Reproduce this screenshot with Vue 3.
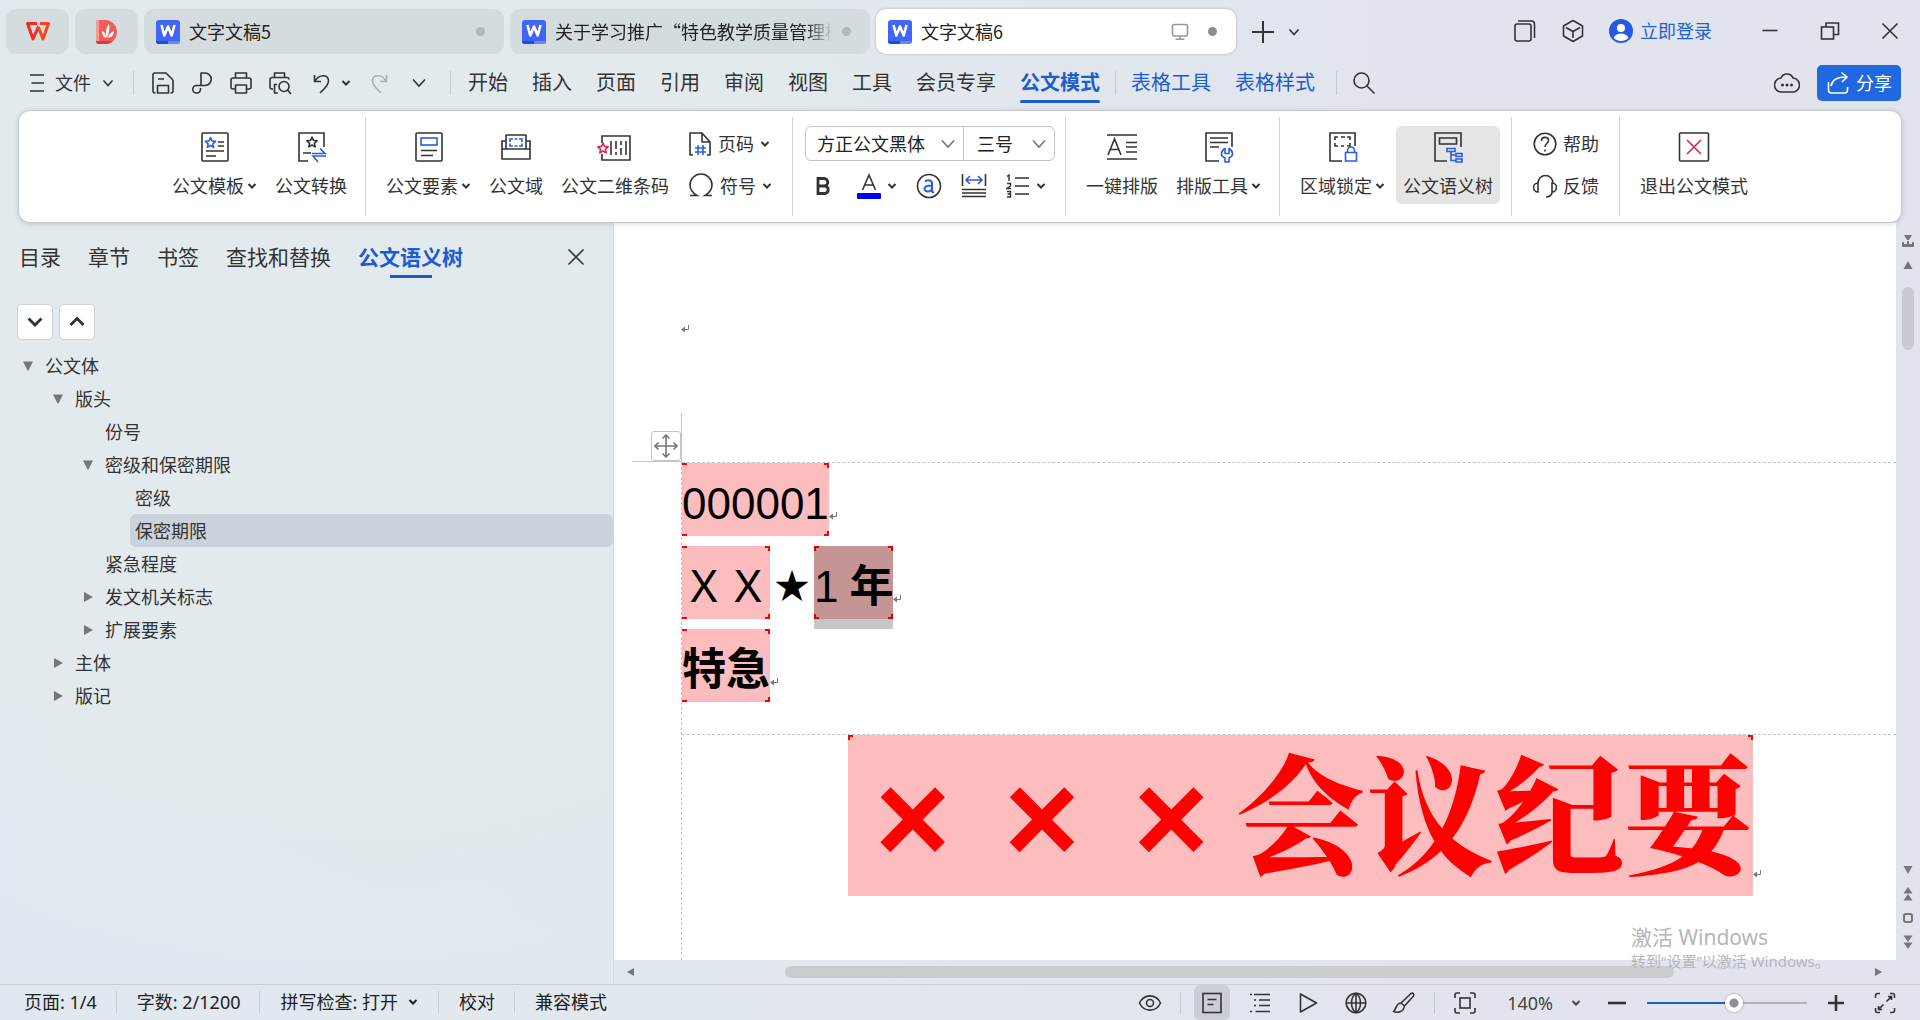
<script setup>
import { h, ref } from 'vue'

const blue = '#2b5ce6'
const red = '#d02850'
const star = (x, y, c) =>
  `<path stroke="${c}" stroke-linejoin="round" d="M${x} ${y - 5}l1.5 3.4 3.6.4-2.7 2.5.8 3.6-3.2-1.9-3.2 1.9.8-3.6-2.7-2.5 3.6-.4z"/>`

const glyphs = {
  wps: [26, 24, '<path stroke="#f5291c" stroke-width="3" stroke-linejoin="round" d="M12 3.500H2.500L8 19l5.500-12.500"/><path stroke="#f8431c" stroke-width="3" stroke-linejoin="round" d="M15 3.500h8.500L18 19 13.500 7.500"/>'],
  pdf: [24, 26, '<path stroke="none" fill="#f25c5c" d="M1 4a3 3 0 013-3h6a12 12 0 010 24H4a3 3 0 01-3-3z"/><path stroke="none" fill="#f79a9a" d="M1 4a3 3 0 013-3v21H1z"/><path stroke="none" fill="#d93a3a" d="M1 22h17c-2 2-5 3-8 3H4a3 3 0 01-3-3z"/><path stroke="none" fill="#fff" d="M12 19c-2-5-1-10 2-14 1 4 0 9-2 14zM11 19c-3-1-4-4-4-7 3 1 4 4 4 7zM13 19c1-4 3-6 6-7 0 4-2 6-6 7z"/>'],
  doc: [24, 24, '<rect stroke="none" width="24" height="24" rx="3" fill="#4166f5"/><path stroke="none" fill="#144fe0" d="M0 21h12v3H3a3 3 0 01-3-3z"/><path stroke="none" fill="#5c8cff" d="M12 21h12a3 3 0 01-3 3h-9z"/><path stroke="#fff" stroke-width="2.600" stroke-linejoin="round" d="M5.500 5l2.800 10.500L12 6.500l3.700 9L18.500 5"/>'],
  monitor: [18, 18, '<rect x="1.500" y="1.500" width="15" height="11.500" rx="2"/><path d="M9 13v3M4.500 16.200h9"/>'],
  plus: [22, 22, '<path stroke-width="2" d="M11 0v22M0 11h22"/>'],
  down: [12, 12, '<path d="M1.500 3.500L6 8.500l4.500-5"/>'],
  downWide: [14, 12, '<path d="M1 2.500l6 6.500 6-6.500"/>'],
  caret: [10, 10, '<path stroke-width="2" d="M1.500 3l3.500 3.500L8.500 3"/>'],
  windows: [24, 24, '<rect x="2" y="5" width="16" height="17" rx="2"/><path d="M5 2h13.500a3 3 0 013 3v14"/>'],
  cube: [24, 24, '<path stroke-linejoin="round" d="M12 1.500l9.500 5.500v10L12 22.500 2.500 17V7zM5 8.500l7 4 7-4M12 12.500V19"/>'],
  user: [24, 24, '<circle cx="12" cy="12" r="12" fill="#2459e0" stroke="none"/><circle cx="12" cy="9" r="4" fill="#fff" stroke="none"/><path d="M4.500 19c2-6 13-6 15 0-4 4-11 4-15 0z" fill="#fff" stroke="none"/>'],
  min: [20, 20, '<path d="M2.500 9.500h15"/>'],
  restore: [20, 20, '<rect x="1.500" y="6" width="12" height="12"/><path d="M6 6V2h12.500v11.500h-5"/>'],
  close: [18, 18, '<path d="M1.500 1.500l15 15M16.500 1.500l-15 15"/>'],
  menu: [14, 20, '<path d="M0 2h14M1.500 10h12.500M0 18h14"/>'],
  save: [24, 24, '<path stroke-linejoin="round" d="M22 9v11a2 2 0 01-2 2h-.5M4.500 22H4a2 2 0 01-2-2V4a2 2 0 012-2h11l7 7M7 8h6M6.500 22v-7.500h11V22z"/>'],
  link: [24, 24, '<path stroke-linejoin="round" d="M11 14.500V2h4a6.200 6.200 0 010 12.500H6.500a3.700 3.700 0 100 7.500c2.500 0 4-1.500 4-4v-1"/>'],
  print: [24, 24, '<path stroke-linejoin="round" d="M6.500 7V2h11v5M6 18H4a2 2 0 01-2-2V9a2 2 0 012-2h16a2 2 0 012 2v7a2 2 0 01-2 2h-2M6.500 14h11v8h-11z"/>'],
  preview: [24, 24, '<path stroke-linejoin="round" d="M6.500 6.500V2h10v4.500M5 18H4a2 2 0 01-2-2V8.500a2 2 0 012-2h15a2 2 0 012 2M10 22H6.500v-8.500H9"/><circle cx="16" cy="15.500" r="5"/><path d="M19.500 19l3.500 4"/>'],
  undo: [24, 24, '<path d="M7.500 4v6.500h6.500M8 10c4-7 13-7 13.500-.5.2 4-3 7-8.500 12.500"/>'],
  redo: [24, 24, '<path d="M18.500 4v6.500H12M18 10C14 3 5 3 4.500 9.500c-.2 4 3 7 8.500 12.500"/>'],
  search: [24, 24, '<circle cx="9.500" cy="9.500" r="7.500"/><path d="M15 15l7.500 7.500"/>'],
  cloud: [26, 24, '<path d="M7 7a6.500 6.500 0 0112 0 7 7 0 01-1 14H8A7 7 0 017 7z"/><g fill="currentColor" stroke="none"><circle cx="8.500" cy="14" r="1.500"/><circle cx="13" cy="14" r="1.500"/><circle cx="17.500" cy="14" r="1.500"/></g>'],
  share: [24, 24, '<path d="M2.500 11v8a3 3 0 003 3h13a3 3 0 003-3v-3M5 15c1-6 6-9 15-9M15.500 1.500L21 6l-5 5"/>'],

  template: [32, 32, `<rect x="3" y="2" width="26" height="28" rx="1"/>${star(11.5, 11.5, blue)}<path d="M19 11h6M19 15h6M7 20h18M7 25h10"/>`],
  convert: [32, 32, `<path d="M13 30H4V2h25v14M8 22h8"/>${star(17, 11, '#333')}<path stroke="${blue}" d="M17 22.500h13l-5-5M31 25H18l5 6"/>`],
  element: [32, 32, `<rect x="3" y="2" width="26" height="28" rx="1"/><rect x="8" y="7" width="16" height="7" stroke="${blue}"/><path d="M8 19.500h16M8 24.500h12"/>`],
  field: [32, 32, `<path stroke-linejoin="round" d="M6 18V4h20v14M6 10H2v18h28V10h-4M2 18h28"/><path stroke="${blue}" d="M10 11V8h3M19 8h3v3M22 12.500V15h-3M13 15h-3v-2.500M14.500 8h3M14.500 15h3"/>`],
  qrcode: [36, 32, `<path d="M5 12V5h28v24H5v-6M14 10v14M19 10v8M19 21v3M24 10v4M24 17v7M29 10v14"/>${star(6, 17, red)}`],
  pageNo: [24, 26, `<path stroke-linejoin="round" d="M5 24H2V2h12l8 9v13h-3M14 2v9h8"/><path stroke="${blue}" d="M10 14v10M15 14v10M7 17h11M7 21h11"/>`],
  omega: [26, 26, '<path d="M2 22.500h7c-5-3-7-6.500-7-10.500a11 11 0 0122 0c0 4-2 7.500-7 10.500h7"/>'],
  bold: [24, 20, '<path stroke-width="2.800" d="M4 2.500h6a3.700 3.700 0 010 7.500H4zM4 10h7a3.800 3.800 0 010 7.500H4z"/>'],
  fontColor: [24, 26, '<path d="M5.500 17L12 2l6.500 15M8 12h8"/><rect y="20" width="24" height="6" rx="1" fill="#0000f5" stroke="none"/>'],
  circleA: [26, 26, `<circle cx="13" cy="13" r="11.500"/><path stroke="${blue}" stroke-width="2" d="M9 8.500c3-2 7-1.500 7 2V18c0 1 1 1.500 2 1M16 12.500c-5 0-7.500 1-7.500 3.300 0 3.700 7.500 3.700 7.500-1"/>`],
  spread: [26, 26, `<path d="M1.500 1v12M24.500 1v12M1 16.500h24M1 20h24M1 23.500h24"/><path stroke="${blue}" d="M5 7h16M9 3L5 7l4 4M17 3l4 4-4 4"/>`],
  numbers: [24, 24, '<path d="M9 4h14M9 12h14M9 20h14"/><path stroke-width="1.400" d="M1 2.500L3 1v6M1 9.500h3.500V12L1 14.500h4M1 17.500h3.500V23H1M1.500 20h3"/>'],
  format: [32, 32, '<path d="M1 4h30M1 28h30M20 11.500h11M20 16h11M20 21h11M2 24L8.500 8 15 24M4.500 18.500h8"/>'],
  formatTool: [32, 32, `<path d="M16 30H3V2h26v14M7 7h18M7 11.500h18M7 16h9"/><path stroke="${blue}" stroke-linejoin="round" d="M22 17.500c-5 3-4.500 8 0 9.500v4h4v-4c4.500-1.500 5-6.500 0-9.500v5h-4z"/>`],
  lock: [32, 32, `<path d="M15 30H3V2h25v13M8 9V6h3M20 6h3v3M23 12v3h-3M11 15H8v-3M14 6h4M14 15h3"/><path stroke="${blue}" d="M18.500 21.500h11V30h-11zM20.500 21.500v-2a3.500 3.500 0 017 0v2"/>`],
  tree: [32, 32, `<path d="M15 30H3V2h26v14M7.500 7h17v6h-17z"/><path stroke="${blue}" d="M15 17.500h8v3h-8zM24 22.500h6v3h-6zM24 28h6v3h-6zM19 20.500v9h5M19 24h5"/>`],
  help: [24, 26, '<circle cx="12" cy="13" r="10.800"/><path d="M8.500 10c0-5 7-4.500 7-.5 0 3-3.500 3-3.500 6.500M12 18.500v2"/>'],
  headset: [24, 26, '<path d="M5 10a7.500 7.500 0 0115 0M5 10a4 4 0 000 9zM19 10a4 4 0 010 9zM19.500 19c-1 3-3 5-6.500 5"/>'],
  exit: [32, 32, `<rect x="1.500" y="2" width="29" height="28" rx="1"/><path stroke="${red}" d="M9 9l14 14M23 9L9 23"/>`],

  chevDown: [18, 18, '<path stroke-width="2.800" d="M2.500 5.500L9 12l6.500-6.500"/>'],
  chevUp: [18, 18, '<path stroke-width="2.800" d="M2.500 12L9 5.500l6.500 6.500"/>'],
  triDown: [12, 12, '<path fill="#777" stroke="none" d="M1 1.500h10L6.500 10.500h-1z"/>'],
  triRight: [12, 12, '<path fill="#777" stroke="none" d="M2 1l9 5-9 5z"/>'],
  move: [24, 24, '<path stroke="#777" d="M12 1v22M1 12h22M8.500 4.500L12 1l3.500 3.500M8.500 19.500L12 23l3.500-3.500M4.500 8.500L1 12l3.500 3.500M19.500 8.500L23 12l-3.500 3.500"/>'],
  ret: [8, 10, '<path stroke="#777" stroke-width="1" d="M7.500 1v4.500H1"/><path fill="#777" stroke="none" d="M0 5.500L4 2.500v6z"/>'],

  eye: [24, 24, '<path d="M1.500 12C6 2.500 18 2.500 22.500 12 18 21.500 6 21.500 1.500 12z"/><circle cx="12" cy="12" r="3.500"/>'],
  page: [24, 24, '<rect x="3" y="2.500" width="18" height="19"/><path d="M7.500 8.500h9M7.500 13.500h6"/>'],
  outline: [24, 24, '<path d="M6 3.500h16M11 9h11M11 14.500h11M7.500 20.500H22M2 3.500h2M6 9h2M6 14.500h2M2 20.500h2"/>'],
  play: [24, 24, '<path stroke-linejoin="round" d="M4.500 3l16 9-16 9z"/>'],
  globe: [24, 24, '<circle cx="12" cy="12" r="9.800"/><path d="M2 12h20M12 2v20M12 2c-6 5-6 15 0 20M12 2c6 5 6 15 0 20"/>'],
  pen: [24, 24, '<path stroke-linejoin="round" d="M9 12l10-9.500c2-1 3.500.5 2.500 2.500L12.500 15zM9 12c-5 0-4.500 6-7.500 8.500 4 1.500 10 1 11-5.500"/>'],
  fit: [24, 24, '<path d="M7 2H4a2 2 0 00-2 2v3M17 2h3a2 2 0 012 2v3M7 22H4a2 2 0 01-2-2v-3M17 22h3a2 2 0 002-2v-3"/><rect x="7" y="7" width="10" height="10"/>'],
  minus: [18, 18, '<path stroke-width="2.600" d="M0 9h18"/>'],
  plusBold: [16, 16, '<path stroke-width="2.600" d="M8 0v16M0 8h16"/>'],
  full: [22, 22, '<path d="M1.500 6V3.500a2 2 0 012-2H6M16 1.500h2.500a2 2 0 012 2V6M1.500 16v2.500a2 2 0 002 2H6M16 20.500h2.500a2 2 0 002-2V16M12.500 9.500l5-5M14 4.500h3.500V8M9.500 12.500l-5 5M4.500 14v3.500H8"/>'],

  sUp: [12, 12, '<path fill="#777" stroke="none" d="M6 2l4.500 8h-9z"/>'],
  sDown: [12, 12, '<path fill="#777" stroke="none" d="M6 10l4.500-8h-9z"/>'],
  sLeft: [12, 12, '<path fill="#777" stroke="none" d="M2 6l7-4v8z"/>'],
  sRight: [12, 12, '<path fill="#777" stroke="none" d="M10 6L3 2v8z"/>'],
  ruler: [14, 14, '<path fill="#777" stroke="none" d="M3 1h8L8 6H6zM1 8h2v2h3V7h2v3h3V8h2v5H1z"/>'],
  dUp: [12, 14, '<path fill="#777" stroke="none" d="M6 0l4.500 6.500h-9zM6 7l4.500 6.500h-9z"/>'],
  dDown: [12, 14, '<path fill="#777" stroke="none" d="M6 7L1.500.5h9zM6 14L1.500 7.500h9z"/>'],
  dot: [12, 12, '<rect x="2" y="2" width="8" height="8" rx="2" stroke="#777" stroke-width="2"/>'],
}

const Icon = (props) => {
  const [w, ht, body] = glyphs[props.name]
  return h('svg', {
    width: w,
    height: ht,
    viewBox: `0 0 ${w} ${ht}`,
    fill: 'none',
    stroke: 'currentColor',
    'stroke-width': 1.6,
    'aria-hidden': 'true',
    innerHTML: body,
  })
}
Icon.props = ['name']

const menus = ['开始', '插入', '页面', '引用', '审阅', '视图', '工具', '会员专享']
const sideTabs = ['目录', '章节', '书签', '查找和替换', '公文语义树']
const tree = [
  { level: 0, label: '公文体', icon: 'triDown' },
  { level: 1, label: '版头', icon: 'triDown' },
  { level: 2, label: '份号' },
  { level: 2, label: '密级和保密期限', icon: 'triDown' },
  { level: 3, label: '密级' },
  { level: 3, label: '保密期限' },
  { level: 2, label: '紧急程度' },
  { level: 2, label: '发文机关标志', icon: 'triRight' },
  { level: 2, label: '扩展要素', icon: 'triRight' },
  { level: 1, label: '主体', icon: 'triRight' },
  { level: 1, label: '版记', icon: 'triRight' },
]
const selected = ref('保密期限')
const zoom = ref(55)
</script>

<template>
  <div class="app">
    <header class="titlebar">
      <button class="tab home" aria-label="首页"><Icon name="wps" /></button>
      <button class="tab home" aria-label="稻壳"><Icon name="pdf" /></button>
      <div class="tab file"><Icon name="doc" /><span class="tab-name">文字文稿5</span><i class="dot"></i></div>
      <div class="tab file"><Icon name="doc" /><span class="tab-name fade">关于学习推广“特色教学质量管理模</span><i class="dot"></i></div>
      <div class="tab file current">
        <Icon name="doc" /><span class="tab-name">文字文稿6</span><Icon name="monitor" class="grey" /><i class="dot"></i>
      </div>
      <button class="new-tab" aria-label="新建"><Icon name="plus" /></button>
      <button aria-label="标签列表"><Icon name="down" /></button>
      <div class="title-tools">
        <button aria-label="窗口"><Icon name="windows" /></button>
        <button aria-label="应用"><Icon name="cube" /></button>
        <button class="login"><Icon name="user" />立即登录</button>
      </div>
      <div class="win-buttons">
        <button aria-label="最小化"><Icon name="min" /></button>
        <button aria-label="还原"><Icon name="restore" /></button>
        <button aria-label="关闭"><Icon name="close" /></button>
      </div>
    </header>

    <nav class="menubar">
      <button class="file-menu"><Icon name="menu" />文件<Icon name="down" /></button>
      <i class="sep first"></i>
      <div class="quick">
        <button aria-label="保存"><Icon name="save" /></button>
        <button aria-label="输出"><Icon name="link" /></button>
        <button aria-label="打印"><Icon name="print" /></button>
        <button aria-label="打印预览"><Icon name="preview" /></button>
        <button class="undo" aria-label="撤销"><Icon name="undo" /><Icon name="caret" /></button>
        <button class="disabled" aria-label="恢复"><Icon name="redo" /></button>
        <button class="more" aria-label="更多"><Icon name="downWide" /></button>
      </div>
      <i class="sep"></i>
      <div class="menus">
        <button v-for="m in menus" :key="m">{{ m }}</button>
        <button class="on">公文模式</button>
      </div>
      <i class="sep"></i>
      <div class="menus blue"><button>表格工具</button><button>表格样式</button></div>
      <i class="sep tight"></i>
      <button aria-label="搜索"><Icon name="search" /></button>
      <div class="menu-right">
        <button aria-label="云"><Icon name="cloud" /></button>
        <button class="share"><Icon name="share" />分享</button>
      </div>
    </nav>

    <section class="ribbon">
      <div class="group">
        <button class="big"><Icon name="template" /><span>公文模板<Icon name="caret" /></span></button>
        <button class="big"><Icon name="convert" /><span>公文转换</span></button>
      </div>
      <div class="group">
        <button class="big"><Icon name="element" /><span>公文要素<Icon name="caret" /></span></button>
        <button class="big"><Icon name="field" /><span>公文域</span></button>
        <button class="big"><Icon name="qrcode" /><span>公文二维条码</span></button>
        <div class="stack">
          <button><Icon name="pageNo" />页码<Icon name="caret" /></button>
          <button><Icon name="omega" />符号<Icon name="caret" /></button>
        </div>
      </div>
      <div class="group font-group">
        <div class="font-boxes">
          <label class="font-name"><select aria-label="字体"><option>方正公文黑体</option></select><Icon name="downWide" /></label>
          <label class="font-size"><select aria-label="字号"><option>三号</option></select><Icon name="downWide" /></label>
        </div>
        <div class="font-tools">
          <button aria-label="加粗"><Icon name="bold" /></button>
          <button aria-label="字体颜色"><Icon name="fontColor" /><Icon name="caret" /></button>
          <button aria-label="带圈字符"><Icon name="circleA" /></button>
          <button aria-label="分散对齐"><Icon name="spread" /></button>
          <button aria-label="编号"><Icon name="numbers" /><Icon name="caret" /></button>
        </div>
      </div>
      <div class="group">
        <button class="big"><Icon name="format" /><span>一键排版</span></button>
        <button class="big"><Icon name="formatTool" /><span>排版工具<Icon name="caret" /></span></button>
      </div>
      <div class="group">
        <button class="big"><Icon name="lock" /><span>区域锁定<Icon name="caret" /></span></button>
        <button class="big active"><Icon name="tree" /><span>公文语义树</span></button>
      </div>
      <div class="group">
        <div class="stack">
          <button><Icon name="help" />帮助</button>
          <button><Icon name="headset" />反馈</button>
        </div>
      </div>
      <div class="group">
        <button class="big"><Icon name="exit" /><span>退出公文模式</span></button>
      </div>
    </section>

    <main class="workspace">
      <aside class="side">
        <div class="side-tabs">
          <button v-for="t in sideTabs" :key="t" :class="{ on: t === '公文语义树' }">{{ t }}</button>
          <button class="side-close" aria-label="关闭窗格"><Icon name="close" /></button>
        </div>
        <div class="side-tools">
          <button aria-label="展开"><Icon name="chevDown" /></button>
          <button aria-label="收起"><Icon name="chevUp" /></button>
        </div>
        <ul class="tree">
          <li v-for="n in tree" :key="n.label" :class="'level-' + n.level">
            <span class="toggle"><Icon v-if="n.icon" :name="n.icon" /></span>
            <button :class="{ selected: n.label === selected }" @click="selected = n.label">{{ n.label }}</button>
          </li>
        </ul>
      </aside>

      <section class="editor">
        <div class="canvas-row">
          <article class="doc">
            <div class="page-head"><Icon name="ret" /></div>
            <div class="corner"><button class="handle" aria-label="移动表格"><Icon name="move" /></button></div>
            <div class="sheet">
              <div class="cell top-cell">
                <div class="line"><span class="field">000001</span><Icon name="ret" /></div>
                <div class="line">
                  <span class="field">ＸＸ</span><span class="star">★</span><span class="picked"><span class="field dark"><span>1</span><b>年</b></span></span><Icon name="ret" />
                </div>
                <div class="line"><span class="field"><b>特急</b></span><Icon name="ret" /></div>
              </div>
              <div class="cell title-cell">
                <h1 class="headline">
                  <span v-for="i in 3" :key="i" class="cross">×</span>
                  <span v-for="c in '会议纪要'" :key="c">{{ c }}</span>
                </h1>
                <Icon name="ret" />
              </div>
            </div>
          </article>
          <div class="vscroll">
            <Icon name="ruler" /><Icon name="sUp" />
            <div class="vtrack"><div class="vthumb"></div></div>
            <Icon name="sDown" /><Icon name="dUp" /><Icon name="dot" /><Icon name="dDown" />
          </div>
        </div>
        <div class="hscroll">
          <Icon name="sLeft" />
          <div class="htrack"><div class="hthumb"></div></div>
          <Icon name="sRight" />
        </div>
      </section>
    </main>

    <footer class="status">
      <span class="item">页面: 1/4</span>
      <span class="item">字数: 2/1200</span>
      <button class="item">拼写检查: 打开<Icon name="caret" /></button>
      <button class="item">校对</button>
      <span class="item">兼容模式</span>
      <div class="status-right">
        <button aria-label="护眼"><Icon name="eye" /></button>
        <i class="sep"></i>
        <button class="view-on" aria-label="页面视图"><Icon name="page" /></button>
        <button class="view" aria-label="大纲"><Icon name="outline" /></button>
        <button class="view" aria-label="阅读"><Icon name="play" /></button>
        <button class="view" aria-label="网页"><Icon name="globe" /></button>
        <button class="view" aria-label="写作"><Icon name="pen" /></button>
        <i class="sep"></i>
        <button aria-label="适应"><Icon name="fit" /></button>
        <button class="percent">140%<Icon name="caret" /></button>
        <button aria-label="缩小"><Icon name="minus" /></button>
        <input v-model="zoom" type="range" min="0" max="100" aria-label="缩放" />
        <button aria-label="放大"><Icon name="plusBold" /></button>
        <button class="fullscreen" aria-label="全屏"><Icon name="full" /></button>
      </div>
    </footer>

    <div class="watermark">
      <p class="wm-title">激活 Windows</p>
      <p>转到“设置”以激活 Windows。</p>
    </div>
  </div>
</template>

<style>
body {
  margin: 0;
}
</style>

<style scoped>
.app {
  position: relative;
  display: flex;
  flex-direction: column;
  height: 100vh;
  overflow: hidden;
  color: #222;
  font: 18px/24px "Noto Sans", "Noto Sans CJK SC", sans-serif;
  background:
    radial-gradient(ellipse 40% 60% at 18% 35%, #e2eaed 60%, transparent),
    linear-gradient(90deg, #e1e8f0, #e2e8ed 45%, #e1e4ed 75%);
}
svg {
  flex: none;
  display: block;
}
button {
  display: flex;
  align-items: center;
  padding: 0;
  border: 0;
  background: none;
  color: #333;
  font: inherit;
  white-space: nowrap;
}
.sep {
  width: 1px;
  height: 24px;
  background: #c4cacd;
}

/* window title bar */
.titlebar {
  display: flex;
  align-items: center;
  gap: 6px;
  height: 45px;
  padding: 9px 0 2px 6px;
}
.tab {
  display: flex;
  align-items: center;
  box-sizing: border-box;
  height: 45px;
  border-radius: 10px;
  background: rgba(195, 203, 206, 0.45);
}
.home {
  justify-content: center;
  width: 63px;
}
.file {
  flex: 0 1 360px;
  gap: 9px;
  min-width: 0;
  padding: 0 19px 0 12px;
}
.current {
  background: #fff;
  box-shadow: 0 0 3px rgba(0, 0, 0, 0.25);
}
.tab-name {
  flex: 1;
  overflow: hidden;
  font-family: "Noto Sans CJK SC", sans-serif;
  line-height: 26px;
  padding-bottom: 2px;
  white-space: nowrap;
}
.fade {
  mask-image: linear-gradient(90deg, #000 90%, transparent);
}
.grey {
  color: #999;
  margin-right: 10px;
}
.dot {
  width: 9px;
  height: 9px;
  border-radius: 50%;
  background: #b4b8ba;
}
.current .dot {
  background: #8e8e8e;
}
.new-tab {
  margin: 0 8px 0 10px;
}
.title-tools,
.win-buttons {
  display: flex;
  padding-bottom: 2px;
}
.title-tools {
  gap: 24px;
  margin-left: auto;
}
.login {
  gap: 7px;
  color: #1f5fd0;
}
.win-buttons {
  margin-left: 22px;
}
.win-buttons button {
  justify-content: center;
  width: 60px;
}

/* menu bar */
.menubar {
  display: flex;
  align-items: center;
  height: 54px;
  padding: 0 19px 0 30px;
}
.file-menu {
  gap: 11px;
}
.menubar .sep {
  margin: 0 17px 0 19px;
}
.menubar .first {
  margin: 0 17px 0 19px;
}
.menubar .sep.tight {
  margin: 0 15px 0 21px;
}
.quick {
  display: flex;
  align-items: center;
  gap: 15px;
}
.undo {
  gap: 10px;
  width: 46px;
}
.more {
  justify-content: center;
  width: 24px;
}
.disabled {
  color: #aaaeb0;
}
.menus {
  display: flex;
  gap: 24px;
  font-size: 20px;
}
.menubar .menus + .sep {
  margin: 0 15px;
}
.menubar .blue + .sep {
  margin-left: 21px;
}
.menus .on {
  position: relative;
  color: #1b5cd0;
  font-weight: 700;
}
.menus .on::after {
  content: "";
  position: absolute;
  inset: auto 0 -8px;
  height: 3px;
  border-radius: 2px;
  background: #1b5cd0;
}
.blue button {
  color: #1b5cd0;
}
.menu-right {
  display: flex;
  align-items: center;
  gap: 17px;
  margin-left: auto;
}
.share {
  gap: 6px;
  height: 36px;
  padding: 0 9px;
  border-radius: 5px;
  background: #1f68e0;
  color: #fff;
}

/* ribbon */
.ribbon {
  position: relative;
  z-index: 1;
  display: flex;
  align-items: flex-start;
  height: 99px;
  margin: 0 18px;
  padding: 6px 0 6px 146px;
  border: 1px solid #c6cacf;
  border-radius: 12px;
  background: #fff;
  box-shadow: 0 1px 5px rgba(0, 0, 0, 0.16);
}
.group {
  display: flex;
  gap: 4px;
  box-sizing: border-box;
  height: 99px;
  padding: 9px 11px 0 13px;
  border-right: 1px solid #d4d4d4;
}
.group:first-child {
  padding-left: 0;
}
.group:last-child {
  border-right: 0;
}
.big {
  flex-direction: column;
  gap: 11px;
  height: 78px;
  padding: 5px 7px 0;
  box-sizing: border-box;
  border-radius: 6px;
}
.big span {
  display: flex;
  align-items: center;
  gap: 3px;
}
.active {
  background: #e5e5e5;
}
.stack {
  display: flex;
  flex-direction: column;
  gap: 7px;
  padding: 0 9px 0 8px;
}
.stack button {
  gap: 6px;
  height: 35px;
}
.font-group {
  flex-direction: column;
  gap: 12px;
}
.font-boxes {
  display: flex;
  box-sizing: border-box;
  height: 35px;
  border: 1px solid #c4c4c4;
  border-radius: 6px;
}
.font-boxes label {
  position: relative;
  display: flex;
  align-items: center;
  box-sizing: border-box;
  color: #777;
}
.font-name {
  width: 158px;
  border-right: 1px solid #c4c4c4;
}
.font-size {
  width: 90px;
}
.font-boxes svg {
  position: absolute;
  right: 8px;
  pointer-events: none;
}
select {
  width: 100%;
  height: 100%;
  padding: 0 0 0 11px;
  border: 0;
  background: none;
  color: #222;
  font: inherit;
  appearance: none;
}
.font-size select {
  padding-left: 13px;
}
.font-tools {
  display: flex;
  align-items: center;
  gap: 19px;
  height: 26px;
  padding-left: 9px;
}
.font-tools button {
  gap: 6px;
}
.ribbon .font-group {
  padding-left: 12px;
  padding-right: 10px;
}

/* side pane */
.workspace {
  display: flex;
  flex: 1;
  min-height: 0;
}
.side {
  flex: 0 0 32%;
  box-sizing: border-box;
  max-width: 614px;
  border-right: 1px solid #d3d8dc;
}
.side-tabs {
  display: flex;
  gap: 27px;
  padding: 18px 28px 0 19px;
  font-size: 21px;
  line-height: 32px;
}
.side-tabs .on {
  position: relative;
  color: #1b5cd0;
  font-weight: 700;
}
.side-tabs .on::after {
  content: "";
  position: absolute;
  bottom: -5px;
  left: 50%;
  width: 42px;
  height: 3px;
  margin-left: -21px;
  background: #1b5cd0;
}
.side-close {
  margin-left: auto;
}
.side-tools {
  display: flex;
  gap: 6px;
  padding: 31px 17px 9px;
}
.side-tools button {
  justify-content: center;
  box-sizing: border-box;
  width: 36px;
  height: 36px;
  border: 1px solid #cdd2d5;
  border-radius: 5px;
  background: #fff;
}
.tree {
  margin: 0;
  padding: 0;
  list-style: none;
}
.tree li {
  display: flex;
  align-items: center;
  height: 33px;
}
.tree .level-0 { padding-left: 16px; }
.tree .level-1 { padding-left: 46px; }
.tree .level-2 { padding-left: 76px; }
.tree .level-3 { padding-left: 106px; }
.toggle {
  display: flex;
  justify-content: center;
  width: 24px;
}
.tree button {
  flex: 1;
  height: 33px;
  padding-left: 5px;
  border-radius: 6px;
}
.tree .selected {
  background: #cbd2dc;
}

/* document */
.editor {
  flex: 1;
  display: flex;
  flex-direction: column;
  min-width: 0;
}
.canvas-row {
  display: flex;
  flex: 1;
  min-height: 0;
}
.doc {
  flex: 1;
  display: flex;
  flex-direction: column;
  min-width: 0;
  overflow: hidden;
  background: #fff;
  color: #000;
}
.page-head {
  height: 89px;
  padding: 101px 0 0 67px;
}
.corner {
  position: relative;
  flex: none;
  width: 49px;
  height: 48px;
  margin-left: 18px;
  border: solid #c4c4c4;
  border-width: 0 1px 1px 0;
}
.handle {
  position: absolute;
  right: 0;
  bottom: 0;
  justify-content: center;
  width: 30px;
  height: 30px;
  border: 1px solid #c4c4c4;
  border-radius: 3px;
  background: #fff;
}
.sheet {
  flex: 1;
  margin-left: 67px;
  border-left: 1px dashed #c4c4c4;
}
.cell {
  border-top: 1px dashed #c4c4c4;
}
.top-cell {
  display: flex;
  flex-direction: column;
  gap: 10px;
  height: 271px;
}
.line {
  display: flex;
  height: 73px;
  font: 44px/63px "Liberation Sans", "Noto Sans CJK SC", sans-serif;
}
.line > svg {
  align-self: flex-end;
  margin-bottom: 15px;
}
.field,
.star {
  box-sizing: border-box;
  height: 73px;
  padding-top: 9px;
}
.star {
  width: 44px;
  font-size: 35px;
  text-align: center;
}
.field,
.headline {
  --r: linear-gradient(#f00, #f00);
  background:
    var(--r) left top / 5px 2px no-repeat,
    var(--r) right top / 5px 2px no-repeat,
    var(--r) right top / 2px 5px no-repeat,
    var(--r) left bottom / 5px 2px no-repeat,
    var(--r) right bottom / 5px 2px no-repeat,
    var(--r) right bottom / 2px 5px no-repeat,
    #fdbdbe;
}
.picked {
  height: 83px;
  background: #c6c6c6;
}
.dark {
  display: flex;
  gap: 11px;
  --r: linear-gradient(#e00000, #e00000);
  background:
    var(--r) left top / 5px 2px no-repeat,
    var(--r) left top / 2px 5px no-repeat,
    var(--r) right top / 5px 2px no-repeat,
    var(--r) right top / 2px 5px no-repeat,
    var(--r) left bottom / 5px 2px no-repeat,
    var(--r) left bottom / 2px 5px no-repeat,
    var(--r) right bottom / 5px 2px no-repeat,
    var(--r) right bottom / 2px 5px no-repeat,
    #c59494;
}
.title-cell {
  display: flex;
  padding-left: 166px;
}
.title-cell > svg {
  margin-top: 134px;
}
.headline {
  display: flex;
  width: 905px;
  height: 161px;
  margin: 0;
  background:
    var(--r) left top / 5px 2px no-repeat,
    var(--r) left top / 2px 5px no-repeat,
    var(--r) right top / 5px 2px no-repeat,
    var(--r) right top / 2px 5px no-repeat,
    #fdbdbe;
  color: #f00;
  font: 900 129px/150px "Noto Serif CJK SC", "Noto Sans CJK SC", serif;
}
.headline span {
  flex: 1;
  text-align: center;
}
.headline .cross {
  font-family: "Liberation Sans", sans-serif;
  line-height: 166px;
}

/* scroll bars */
.vscroll {
  display: flex;
  flex-direction: column;
  align-items: center;
  gap: 11px;
  width: 24px;
  padding: 11px 0;
}
.vtrack {
  flex: 1;
  padding-top: 5px;
}
.vthumb {
  width: 12px;
  height: 63px;
  border-radius: 6px;
  background: #c8cbd1;
}
.hscroll {
  display: flex;
  align-items: center;
  height: 24px;
  padding: 0 36px 0 11px;
}
.htrack {
  flex: 1;
}
.hthumb {
  width: 72%;
  height: 12px;
  margin-left: 12%;
  border-radius: 6px;
  background: #c9cdd0;
}

/* status bar */
.status {
  display: flex;
  align-items: center;
  height: 35px;
  padding: 0 24px 0 4px;
  border-top: 1px solid #c9cdd2;
}
.item {
  display: flex;
  align-items: center;
  gap: 10px;
  height: 22px;
  padding: 0 19px 0 20px;
  color: #222;
  line-height: 22px;
  white-space: nowrap;
}
.item + .item {
  border-left: 1px solid #c9cdd2;
}
button.item:has(svg) {
  padding-right: 20px;
}
.item:nth-child(-n + 5) {
  margin-bottom: 1px;
}
.status-right {
  display: flex;
  align-items: center;
  margin-left: auto;
}
.status-right .sep {
  height: 22px;
  margin: 0 18px 0 12px;
}
.status-right .sep:nth-of-type(1) {
  margin: 0 13px 0 18px;
}
.view-on,
.view {
  justify-content: center;
  width: 36px;
  height: 35px;
  margin-right: 12px;
}
.view-on {
  border-radius: 6px;
  background: #cbced7;
}
.view:nth-of-type(6) {
  margin-right: 0;
}
.percent {
  gap: 18px;
  margin: 0 27px 0 30px;
  color: #444;
}
.status-right input {
  width: 160px;
  height: 20px;
  margin: 0 21px;
  background: linear-gradient(90deg, #1b5cd0 55%, #b0b3b8 55%) center / 100% 2px no-repeat;
  appearance: none;
}
.status-right input::-webkit-slider-thumb {
  width: 18px;
  height: 18px;
  border-radius: 50%;
  background: radial-gradient(circle, #909090 4px, #fff 5px);
  box-shadow: 0 0 2px rgba(0, 0, 0, 0.5);
  appearance: none;
}
.fullscreen {
  margin-left: 30px;
}

.watermark {
  position: absolute;
  right: 96px;
  bottom: 47px;
  color: #b4b6ba;
  font-size: 15px;
  pointer-events: none;
}
.watermark p {
  width: 193px;
  margin: 0;
  white-space: nowrap;
}
.watermark .wm-title {
  font-size: 21px;
}
</style>
